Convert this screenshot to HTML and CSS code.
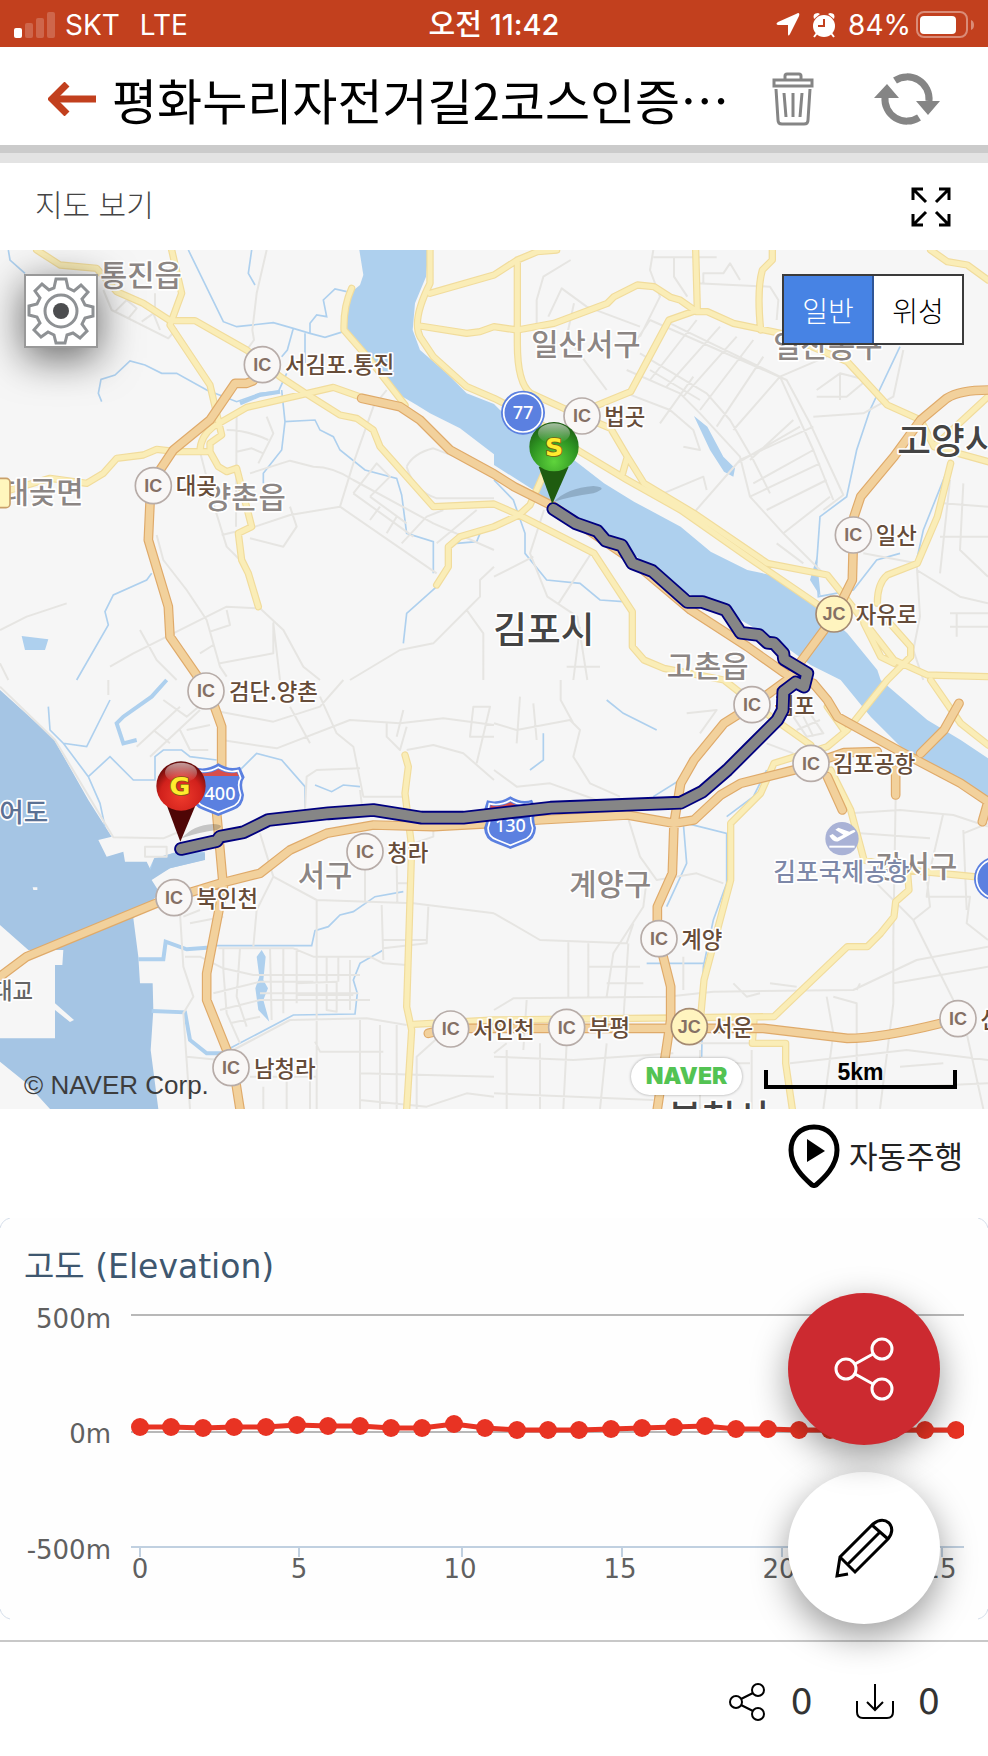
FILE: index.html
```html
<!DOCTYPE html>
<html lang="ko">
<head>
    <meta charset="UTF-8">
    <meta name="viewport" content="width=device-width, initial-scale=1.0">
    <title>평화누리자전거길2코스인증</title>
    <link rel="stylesheet" href="styles.css">
</head>
<body>
    <div class="status-bar">
        <div class="status-left">
            <svg width="42" height="26" viewBox="0 0 42 26" fill="#fff">
                <rect x="0" y="16" width="8" height="10" rx="2"/>
                <g opacity=".2">
                    <rect x="11" y="11" width="8" height="15" rx="2"/>
                    <rect x="22" y="6" width="8" height="20" rx="2"/>
                    <rect x="33" y="0" width="8" height="26" rx="2"/>
                </g>
            </svg>
            <span>SKT</span>
            <span class="network">LTE</span>
        </div>
        <div class="status-time">오전 11:42</div>
        <div class="status-right">
            <svg width="24" height="24" viewBox="0 0 24 24" fill="#fff"><path d="M22 0Q24 0 23 3L14 21Q12 24 12 21V12H2Q-1 11 2 9L20 1Z"/></svg>
            <svg class="alarm" width="24" height="26" viewBox="0 0 24 26">
                <circle cx="12" cy="14" r="11" fill="#fff"/>
                <path d="M2 7Q0 1 6 1L8 2ZM22 7Q24 1 18 1L16 2Z" fill="#fff"/>
                <path d="M5 21L2 25M19 21L22 25" stroke="#fff" stroke-width="2"/>
                <path d="M12 7V14H6" fill="none" stroke="#c2401e" stroke-width="2"/>
            </svg>
            <span>84%</span>
            <svg class="battery" width="58" height="28" viewBox="0 0 58 28">
                <rect x="1" y="1" width="50" height="25" rx="7" fill="none" stroke="#fff" stroke-opacity=".4" stroke-width="2"/>
                <rect x="4" y="5" width="36" height="18" rx="4" fill="#fff"/>
                <path d="M55 9Q58 10 58 14T55 19Z" fill="#fff" fill-opacity=".4"/>
            </svg>
        </div>
    </div>

    <header class="header">
        <button class="icon-btn back" aria-label="뒤로">
            <svg width="49" height="34" viewBox="0 0 49 34" fill="none" stroke="#c2401e"><path d="M48 17H5" stroke-width="7"/><path d="M19 2L4 17L19 32" stroke-width="7"/></svg>
        </button>
        <h1>평화누리자전거길2코스인증⋯</h1>
        <button class="icon-btn trash" aria-label="삭제">
            <svg width="42" height="54" viewBox="0 0 42 54" fill="none" stroke="#858585" stroke-width="3">
                <path d="M13 7V4Q13 2 15 2H27Q29 2 29 4V7"/>
                <rect x="2" y="8" width="38" height="6"/>
                <path d="M4 17L6 48Q6 52 10 52H32Q36 52 36 48L38 17M12 21L14 45M21 21V45M30 21L28 45"/>
            </svg>
        </button>
        <button class="icon-btn" aria-label="새로고침">
            <svg width="66" height="52" viewBox="0 0 66 52">
                <path d="M21 7.500A22 22 0 0 1 55 28M45 44.500A22 22 0 0 1 11 24" fill="none" stroke="#858585" stroke-width="7"/>
                <path d="M42 28H66L54 42ZM0 25H25L13 11Z" fill="#858585"/>
            </svg>
        </button>
    </header>

    <div class="map-title">
        <h2>지도 보기</h2>
        <button class="icon-btn" aria-label="전체 화면">
            <svg width="40" height="40" viewBox="0 0 40 40" fill="none" stroke="#000" stroke-width="3">
                <path d="M2 13V2H12M2 2L15 15M28 2H38V13M38 2L25 15M2 27V38H12M2 38L15 25M28 38H38V27M38 38L25 25"/>
            </svg>
        </button>
    </div>

    <div class="map">
        <svg class="map-canvas" viewBox="0 0 2964 2577">
            <defs>
                <radialGradient id="green" cx=".5" cy=".8" r=".8"><stop offset="0" stop-color="#5fd43c"/><stop offset=".6" stop-color="#2e9422"/><stop offset="1" stop-color="#1c5a12"/></radialGradient>
                <radialGradient id="red" cx=".5" cy=".7" r=".7"><stop offset="0" stop-color="#ef3b2c"/><stop offset=".6" stop-color="#d1211c"/><stop offset="1" stop-color="#5c0808"/></radialGradient>
                <linearGradient id="shine" x2="0" y2="1"><stop offset="0" stop-color="#fff" stop-opacity=".6"/><stop offset="1" stop-color="#fff" stop-opacity="0"/></linearGradient>
                <path id="yellow" d="M110 0L180 45 290 55 350 125 430 160 510 212 585 212 740 300 840 380 920 432 1020 495 1070 505 1120 540 1140 590 1300 770 1482 762 1557 795 1782 910 1897 1085 1897 1190 1932 1230 1992 1255 2172 1290 2312 1400 2432 1485
                    M515 0L545 130 510 225 630 405 665 555 630 580 630 605 655 650 680 665 710 655 755 830 715 850 725 930 745 970 775 1070
                    M30 720L150 685 260 700 310 670 350 625 430 615 470 598 530 605 620 605
                    M600 605Q600 560 640 530L740 472 1000 412 1085 442
                    M1055 115Q1030 170 1032 240L1110 330 1215 465
                    M1290 0V100Q1235 210 1260 260L1300 320 1400 410 1482 445 1590 500 1740 605 1882 690 2042 780 2242 920 2462 1070
                    M1290 130L1482 75 1552 30 1612 5 1670 0M1260 228L1400 250 1440 245 1482 230 1552 240 1662 220 1822 160 1842 140 1912 105 1962 110 2012 142 2040 150 2090 185 2122 185 2200 220 2342 250 2542 335 2662 465 2762 510 2802 590 2964 635
                    M1552 30V280Q1552 400 1592 430L1702 480 1832 535 1882 620 1932 700 2082 790 2302 940 2482 975 2542 1050 2682 1230 2782 1275 2964 1280M1882 620L1865 680
                    M2087 0L2092 180 2007 210 1892 425 1782 470M2317 0V30L2287 60Q2270 120 2282 240M2792 0L2842 35 2902 45 2964 90
                    M1310 1005L1345 950V890L1380 860 1482 830 1557 795 1590 765 1632 670M2802 590L2964 440M2852 640L2812 800 2752 940 2662 975Q2632 1000 2632 1060
                    M2592 1120L2642 1220 2682 1240M2670 1120L2732 1190V1220L2662 1290 2542 1440 2482 1490 2322 1540 2282 1630 2192 1720V1890L2112 2190 2102 2300
                    M1240 2323L1482 2310 2322 2300 2542 2090 2602 2090 2642 2050 2682 2000 2687 1955 2727 1920 2722 1860M2262 2310L2257 2380H2357V2440L2377 2577
                    M2482 1370L2532 1440M2492 1560L2552 1680 2592 1830 2722 1860 2922 1880M2792 1290L2882 1420 2964 1485
                    M1215 1515L1225 1550 1215 1630 1235 1790 1220 2270 1235 2340 1220 2577"/>
                <path id="orange" d="M760 392L740 400H705L630 510 520 600 480 660 450 760 445 870 505 1070 510 1160 600 1290 640 1360 665 1430V1570L650 1690 670 1910 655 1990 620 2170V2250L700 2450 720 2577
                    M1085 445L1200 470 1260 510 1350 600 1482 672 1542 710 1662 770 1882 920 2072 1080 2242 1190 2362 1275 2440 1300 2482 1350 2512 1400 2702 1505 2882 1600 2964 1655 2947 1715
                    M0 2180L80 2120 480 1955 660 1900 780 1870 870 1800 980 1750 1120 1725 1300 1730 1482 1720 1612 1710 1882 1695 2022 1720 2082 1710 2162 1635 2222 1600 2382 1560 2532 1508 2632 1505
                    M2964 420Q2880 420 2840 445L2762 510 2682 620 2582 740 2562 800 2557 990 2502 1100 2362 1290 2252 1370 2172 1420 2082 1530 2042 1600 2022 1720 2017 1870 1972 1970V2050L2012 2210V2310L1972 2577
                    M2877 1360L2832 1440 2762 1510M2687 1560V1635M2482 1580L2527 1680M1285 2350L1350 2335H2290L2542 2365Q2640 2365 2822 2320"/>
                <path id="route" d="M1660 777L1727 820 1792 843 1817 872 1865 886 1897 940 1957 963 2062 1056H2107L2177 1080 2222 1148 2277 1155 2302 1178 2322 1180 2350 1210 2352 1228 2422 1270 2412 1310 2387 1297 2350 1325 2348 1380 2332 1410 2252 1490 2182 1560 2107 1625 2042 1658 1652 1673 1390 1703H1265L1120 1680 985 1690 805 1710 730 1747 660 1760 650 1773 543 1797"/>
            </defs>

            <rect width="2964" height="2577" fill="#f6f6f6"/>
            <path class="river" d="M1078 0L1090 75 1080 105 1050 130 1035 240 1190 430 1250 465 1290 490 1380 535 1482 613V645L1632 740 1882 900 2062 1030 2222 1110 2342 1180 2432 1245 2522 1290 2612 1400 2732 1520 2772 1550 2964 1640V1525L2882 1470 2782 1410 2642 1290 2632 1260 2542 1150 2442 1060 2312 975 2242 960 2132 905 2042 830 1902 755 1812 700 1632 560 1500 480 1482 462 1400 430 1340 370 1260 300 1238 240 1245 160 1278 80 1285 0Z"/>
            <path class="river" d="M65 1158L145 1168 135 1200 75 1200ZM2082 498L2122 530 2170 620 2205 655 2200 680 2172 665 2130 600ZM785 2100L797 2120 790 2190 804 2215 790 2250 808 2315 775 2280 766 2215 778 2180 770 2120ZM2450 920L2462 1040 2430 990ZM430 1895L460 1830 520 1808 615 1805 610 1830 510 1855Z"/>
            <path class="sea" d="M0 1320L160 1465 265 1650 335 1760 295 1770 320 1820 370 1805 375 1835H440L452 1860 462 1825 520 1810H615V1830L510 1855 455 1890 480 1930 400 2005 415 2120 420 2200H458L460 2280 452 2400 475 2577H150L80 2500 0 2435V2365H165V2145H187L190 2100 85 2100 0 2025Z"/>
            <path d="M98 1912H112V1920H100ZM165 2260L222 2310 210 2316 165 2280Z" fill="#f6f6f6"/>
            <path class="stream" d="M565 0L670 215 710 230 820 218 880 235 930 250 975 262 1030 245M930 250V220L950 195 980 200 970 150 1005 117 1040 125M880 235L862 300 845 320M915 250V340M755 0L745 70 765 105M305 455L295 430 303 388 345 375 390 333 435 345 485 370 530 370 620 420 710 455 780 430 835 425 860 370M845 420L855 515 945 510 960 540 1000 560 1020 600 1095 660 1190 685 1205 735 1220 850 1300 875V970M855 515L845 600 790 670V700M455 970L440 990 340 1035 315 1085 325 1125 230 1290M25 0L30 30 75 70M1482 690L1540 750 1575 850 1575 910 1640 990 1740 1000 1800 1050 1870 1055M1310 1010L1220 1090 1210 1180M1440 850L1430 875 1370 880"/>
            <path class="stream" d="M190 1480L265 1580 300 1660 315 1730M145 1370L150 1440 190 1480 260 1490 330 1350M265 1580L330 1520 400 1590H465V1520L490 1500H545L570 1520 650 1530M700 1580L770 1510 845 1530 915 1610V1680M945 1605L995 1625 1030 1605 1080 1610M2050 1720L2060 1840 2000 1970M2060 1720L2180 1750V1900L2140 2010 2110 2150 2105 2420M2300 1560L2260 1640 2180 1700M2450 960L2455 1040 2560 1020 2630 930 2700 910M2850 640L2770 840 2750 930M2700 290L2610 480 2570 600 2540 740 2460 800 2450 940M1820 1350L1870 1390 1970 1440M1630 1450V1530L1590 1560M1960 1640L2040 1590M1940 2140H2110"/>
            <path class="canal" d="M415 2128H490L497 2075 560 2098 640 2092"/>
            <path class="stream" d="M640 2087H935L945 2042 985 2030 1020 1995 1060 1985 1125 1940 1210 1925M690 2395L880 2295 1065 2292 1072 2230 1060 2190 1080 2140 1150 2100"/>
            <path class="canal" d="M455 2283L555 2287 570 2370 620 2410H690M720 460L780 435 840 425M500 1290L455 1340 370 1400 350 1420 370 1480 410 1470"/>

            <path class="minor" d="M800 0L770 130 757 240 762 270 740 300M310 120L335 180 505 265 530 235M345 185L380 150 410 175 385 205M425 215L460 190 480 240M465 130V190M600 605L640 760 680 890 720 930M710 480L708 830M665 855L750 835 870 795 1020 770 1060 640 1120 470 1160 420M870 770L890 830 850 890 750 865M680 540Q740 540 805 570M800 500L820 550 775 640M710 605L755 595 790 610M750 670L870 632 940 650Q1000 650 1060 690L1300 820 1482 900M1060 730L1130 640 1170 680 1110 740M1020 770L1310 970M1060 730L1240 860M1110 740L1220 820M1110 810L1140 770M1160 850L1190 800M1205 880L1280 800 1330 780M1220 650Q1240 610 1300 595L1420 640M1220 650Q1240 720 1310 745H1482M1310 880L1430 780M470 855L490 930 560 1020 620 1110 660 1250 680 1280M330 1250L400 1210 680 1070 780 1075 850 1140 910 1250 960 1290M420 1140L470 1230 530 1290M680 1080L690 1125 630 1145M660 1240L820 1210V1120L840 1290M600 1210L640 1185M1482 950L1440 990V1040L1400 1080 1300 1180 1200 1200 1050 1290M1400 1080L1450 1150V1290M0 1140L80 1100 200 1060M0 1240L25 1290"/>
            <path class="minor" d="M1712 30L1630 80 1610 150V220M1645 200L1685 115 1760 170 1920 230M1722 160L1700 260 1820 420M1960 0L1950 60 1980 140 1920 260M1960 22H2150M2022 20V80L2062 140M2110 100V70H2170L2190 40 2220 90M2090 100L2310 110 2335 150 2330 210M1880 360L2040 430 2100 490 2220 620 2250 740 2350 850 2490 990M1920 310L2120 430 2190 510 2260 630 2310 730M1950 210L2360 390 2430 520 2530 735 2470 780M2010 220L2340 380 2440 600 2500 750M1910 270L1950 210M1950 390L2090 210M2000 410L2160 230M2050 440L2210 260M2100 480L2260 270M2150 530L2290 320M1950 360L2100 450M1880 430L2010 480 2080 540 2100 600 2050 590M1980 520L2080 380M2200 540L2340 380 2480 320M2250 630L2380 510M2210 640L2400 530M2260 700L2440 600M2250 740L2460 640M2300 780L2480 690M2350 850L2490 740M1990 730L2110 680 2120 720M2080 790L2220 630 2440 530M2450 420L2520 370 2600 390 2540 440H2450M2520 370V450M2440 500L2590 490 2680 440 2710 300M1632 780L1590 910 1642 1040 1732 1100 1762 1290M1600 920L1482 980M1676 1060L1780 900M1740 1130L1720 1290M1700 1250H1800M2410 940L2330 880M2590 910L2750 940 2760 1100 2740 1200 2770 1290M2850 690L2820 970M2890 700L2880 900 2964 980M2830 760L2964 770M2820 860H2964M2850 1090H2964M2850 1130H2964M2870 1090V1160M2750 960L2880 1040 2964 1060"/>
            <path class="minor" d="M0 1310L165 1470 340 1762 490 1765 550 1740M435 1790H500V1820H435ZM325 1290V1335M490 1350L560 1400 620 1350M410 1490L540 1370M460 1440L510 1480M450 1520L600 1380M540 1440L570 1500H625M560 1440L630 1425M660 1385L820 1415 960 1370 1030 1290M870 1370L930 1480M665 1470L830 1495 1050 1410 1200 1420 1330 1405 1482 1425M960 1340L1010 1450 1060 1490 1090 1640 1210 1640M1080 1620L1090 1700M1160 1420V1460L1200 1500 1220 1430M1220 1500L1300 1485 1390 1510 1482 1590M1210 1380L1190 1460M1430 1540L1470 1370H1420L1410 1460H1482M915 1680L920 1580 950 1560 1080 1555M780 1750L820 1880 770 1980 760 2090M820 1880L950 1950 1240 1960 1482 1990M950 1950V2577M1095 1860V1960M1190 1840L1192 1960M1190 1900H1240M540 1990L550 2150 580 2240 550 2290 570 2577M550 2000L600 1980M670 2000L570 2020M555 2120H600L670 2155 760 2175H1080M655 2095H880L940 2120H1110L1150 2140 1220 2145M670 2095V2160L680 2290 720 2380M720 2095L710 2240 740 2330M850 2095V2290M810 2095L815 2310M890 2095V2260M640 2230L780 2195H940M780 2230H1075M660 2280L780 2250H1110M690 2320L780 2300M890 2200L1010 2195V2285L980 2280V2120M890 2235H1060M1015 2120V2195M1050 2130V2280M1145 1965L1150 2130M1285 1970L1280 2080 1150 2095M1150 2070H1280M700 2400L870 2310 1100 2305 1220 2325M1080 2310V2577M1140 2325V2577M1190 2325V2577M945 2375L960 2405H1150M560 2420L660 2430M750 2480H950M790 2510V2577M860 2480V2577M930 2480V2577M1250 2577V2420L1350 2330M1080 2470L1482 2480M1080 2550L1280 2570 1400 2530 1482 2540M1300 1725V1760L1240 1780"/>
            <path class="minor" d="M1482 1420L1550 1440 1710 1410 1740 1440 1720 1520 1770 1600 1860 1640M1682 1290V1350L1720 1420M1550 1480L1560 1340M1610 1470L1600 1360M1482 1560L1550 1610 1650 1600 1790 1650M1880 1690L1920 1820 1970 1890 2090 1870 2170 1900M1940 1890L1930 1970 1840 2110 1820 2240M1482 1990L1620 2070 1880 2080 1900 2020M1705 2075V2240M1765 2080V2240M1765 2150H1920M1885 2080L1870 2310M1820 2200H1930M1482 2280L1540 2245 2000 2240 2140 2225 2560 2220 2750 2130 2964 2090M2050 2220V2120M2200 2200L2240 2240 2280 2230M2310 2200L2390 2210M2550 1690L2700 1680 2860 1695 2964 1730M2580 1750L2790 1765M2830 1690L2790 1860 2780 1940H2910L2900 2020 2964 2070M2687 1640L2680 2060V2260L2640 2577M2600 1870L2740 2010 2800 2130 2880 2290M2740 2010L2790 1970 2780 1880M2890 1740L2900 1980M2964 1720L2890 1750M2680 2200L2964 2150M2480 2240L2500 2350 2470 2577M2500 2240L2570 2260V2577M2570 2220L2580 2200M1482 2410L1520 2380M1520 2400V2577M1580 2250L1570 2400M1620 2380V2577M1700 2380L1690 2577M1820 2380L1800 2577M1482 2420L1720 2430 2020 2410M1482 2530L1960 2550M2080 2440H2250M2100 2400V2577M2255 2400V2577M2090 2380H2260M2370 2440L2720 2400 2964 2430M2380 2510H2730L2964 2500M2700 2450L2830 2440M2900 2350L2950 2577M2380 1400L2430 1390 2470 1450 2420 1460ZM2410 1400L2440 1460M2390 1440L2460 1410M2300 1480L2380 1510M2100 1450L2150 1380 2060 1390"/>

            <use href="#yellow" class="yellow-edge"/>
            <use href="#yellow" class="yellow-road"/>
            <use href="#orange" class="orange-edge"/>
            <use href="#orange" class="orange-road"/>

            <g class="area">
                <text x="300" y="108">통진읍</text>
                <text x="5" y="758">대곶면</text>
                <text x="612" y="775">양촌읍</text>
                <text x="1594" y="315">일산서구</text>
                <text x="2320" y="320">일산동구</text>
                <text x="2000" y="1282">고촌읍</text>
                <text x="893" y="1907">서구</text>
                <text x="1708" y="1935">계양구</text>
                <text x="2626" y="1880">강서구</text>
            </g>
            <rect x="-30" y="685" width="60" height="88" rx="12" fill="#fff6bd" stroke="#c9a06a" stroke-width="5"/>
            <g class="city">
                <text x="2692" y="612">고양시</text>
                <text x="1480" y="1178">김포시</text>
                <text x="2004" y="2642">부천시</text>
            </g>
            <text class="island" x="-2" y="1715">어도</text>
            <text class="bridge" x="-24" y="2248">대교</text>
            <circle cx="2526" cy="1766" r="50" fill="#a9b2d6"/>
            <path d="M2488 1790H2564" stroke="#fff" stroke-width="6"/>
            <path d="M2488 1757L2498 1752 2512 1763 2530 1754 2506 1739 2515 1733 2548 1745Q2566 1735 2566 1745L2515 1774Q2500 1778 2488 1757Z" fill="#fff"/>
            <text class="airport" x="2320" y="1893">김포국제공항</text>

            <g class="badge">
                <circle cx="787" cy="344" r="54"/><text x="787" y="363">IC</text>
                <circle cx="460" cy="707" r="54"/><text x="460" y="726">IC</text>
                <circle cx="618" cy="1323" r="54"/><text x="618" y="1342">IC</text>
                <circle cx="1746" cy="498" r="54"/><text x="1746" y="517">IC</text>
                <circle cx="2560" cy="855" r="54"/><text x="2560" y="874">IC</text>
                <circle cx="1095" cy="1805" r="54"/><text x="1095" y="1824">IC</text>
                <circle cx="522" cy="1943" r="54"/><text x="522" y="1962">IC</text>
                <circle cx="693" cy="2453" r="54"/><text x="693" y="2472">IC</text>
                <circle cx="1352" cy="2337" r="54"/><text x="1352" y="2356">IC</text>
                <circle cx="2256" cy="1364" r="54"/><text x="2256" y="1383">IC</text>
                <circle cx="2433" cy="1540" r="54"/><text x="2433" y="1559">IC</text>
                <circle cx="1977" cy="2066" r="54"/><text x="1977" y="2085">IC</text>
                <circle cx="1700" cy="2332" r="54"/><text x="1700" y="2351">IC</text>
                <circle cx="2874" cy="2306" r="54"/><text x="2874" y="2325">IC</text>
                <circle class="jc" cx="2502" cy="1092" r="54"/><text x="2502" y="1111">JC</text>
                <circle class="jc" cx="2068" cy="2330" r="54"/><text x="2068" y="2349">JC</text>
            </g>
            <g class="junction">
                <text x="855" y="369">서김포.통진</text>
                <text x="527" y="732">대곶</text>
                <text x="687" y="1350">검단.양촌</text>
                <text x="1813" y="524">법곳</text>
                <text x="2627" y="881">일산</text>
                <text x="2567" y="1119">자유로</text>
                <text x="1162" y="1833">청라</text>
                <text x="589" y="1970">북인천</text>
                <text x="762" y="2480">남청라</text>
                <text x="1419" y="2364">서인천</text>
                <text x="2322" y="1391">김포</text>
                <text x="2499" y="1567">김포공항</text>
                <text x="2044" y="2093">계양</text>
                <text x="1767" y="2359">부평</text>
                <text x="2136" y="2357">서운</text>
                <text x="2941" y="2333">신월</text>
            </g>

            <g class="shield">
                <circle cx="1569" cy="488" r="66"/><circle class="ring" cx="1569" cy="488" r="58"/>
                <text x="1569" y="507">77</text>
                <circle cx="2988" cy="1886" r="66"/><circle class="ring" cx="2988" cy="1886" r="58"/>
                <path id="plate" d="M585 1552Q620 1562 655 1540Q690 1562 720 1550L734 1582Q720 1600 732 1635Q730 1670 700 1680L655 1698 610 1680Q578 1670 576 1635Q590 1600 576 1582Z"/>
                <path class="ring" d="M592 1562Q625 1570 655 1552Q685 1570 714 1562L722 1584Q710 1600 722 1635Q720 1662 694 1671L655 1687 616 1671Q588 1662 588 1635Q600 1600 588 1584Z"/>
                <path class="plate-top" d="M596 1567Q625 1575 655 1558Q685 1575 710 1567L716 1578H594Z"/>
                <text x="660" y="1650">400</text>
                <g transform="translate(876 99)">
                    <use href="#plate"/>
                    <path class="ring" d="M592 1562Q625 1570 655 1552Q685 1570 714 1562L722 1584Q710 1600 722 1635Q720 1662 694 1671L655 1687 616 1671Q588 1662 588 1635Q600 1600 588 1584Z"/>
                    <path class="plate-top" d="M596 1567Q625 1575 655 1558Q685 1575 710 1567L716 1578H594Z"/>
                    <text x="655" y="1648">130</text>
                </g>
            </g>

            <path d="M1662 755Q1700 715 1780 708Q1830 712 1780 730Q1710 740 1662 755Z" fill="#345" opacity=".25"/>
            <path d="M545 1765Q580 1725 640 1722Q680 1725 650 1740Q600 1745 545 1765Z" fill="#333" opacity=".25"/>
            <use href="#route" class="route-edge"/>
            <use href="#route" class="route-line"/>

            <path d="M1616 650L1657 762 1706 650Z" fill="#1f5c10"/>
            <circle cx="1662" cy="590" r="74" fill="url(#green)"/>
            <ellipse cx="1662" cy="550" rx="48" ry="30" fill="url(#shine)"/>
            <text class="pin-text" x="1662" y="618">S</text>
            <path d="M500 1665L541 1775 587 1665Z" fill="#4f0606"/>
            <circle cx="543" cy="1608" r="74" fill="url(#red)"/>
            <ellipse cx="543" cy="1568" rx="48" ry="30" fill="url(#shine)"/>
            <text class="pin-text" x="540" y="1636">G</text>
        </svg>

        <button class="map-settings" aria-label="설정">
            <svg width="68" height="68" viewBox="-34 -34 68 68">
                <path d="M-5 -32H5L7 -23L13 -20L20 -26L27 -19L21 -12L24 -6L32 -4V5L24 7L21 13L26 20L19 27L12 22L6 24L4 32H-5L-7 24L-13 21L-20 26L-27 19L-21 12L-24 6L-32 4V-5L-24 -7L-21 -13L-26 -20L-19 -27L-12 -21L-7 -23Z" fill="none" stroke="#8e9194" stroke-width="3"/>
                <circle r="16" fill="none" stroke="#8e9194" stroke-width="3"/>
                <circle r="8" fill="#4c4d4f"/>
            </svg>
        </button>
        <div class="map-type">
            <button class="active">일반</button>
            <button>위성</button>
        </div>
        <div class="copyright">© NAVER Corp.</div>
        <div class="naver">NAVER</div>
        <div class="scale">5km</div>
    </div>

    <div class="play-row">
        <button class="play-btn">
            <svg width="52" height="64" viewBox="0 0 52 64">
                <path d="M26 3C12 3 3 13 3 26C3 42 16 54 24 61Q26 62 28 61C36 54 49 42 49 26C49 13 40 3 26 3Z" fill="none" stroke="#000" stroke-width="5"/>
                <path d="M19 15L37 27L19 38Z"/>
            </svg>
            <span>자동주행</span>
        </button>
    </div>

    <div class="chart-wrap">
        <svg class="chart" viewBox="0 1218 988 402">
            <path class="corner" d="M0 1228Q2 1220 10 1218M978 1218Q986 1220 988 1228M0 1609Q2 1617 10 1619M978 1619Q986 1617 988 1609"/>
            <text class="chart-title" x="24" y="1278">고도 (Elevation)</text>
            <g class="chart-y">
                <text x="111" y="1328">500m</text>
                <text x="111" y="1443">0m</text>
                <text x="111" y="1559">-500m</text>
            </g>
            <path class="grid" d="M131 1315H964M131 1432H964"/>
            <path class="axis" d="M131 1547H964M140 1546V1557M299 1546V1557M462 1546V1557M622 1546V1557M782 1546V1557M942 1546V1557"/>
            <g class="chart-x">
                <text x="140" y="1578">0</text>
                <text x="299" y="1578">5</text>
                <text x="460" y="1578">10</text>
                <text x="620" y="1578">15</text>
                <text x="779" y="1578">20</text>
                <text x="940" y="1578">25</text>
            </g>
            <svg x="131" y="1218" width="833" height="402" viewBox="131 1218 833 402">
                <g id="series"></g>
            </svg>
        </svg>
        <div class="fabs">
            <button class="fab fab-share" aria-label="공유">
                <svg width="60" height="64" viewBox="0 0 60 64" fill="none" stroke="#fff" stroke-width="3">
                    <circle cx="12" cy="32" r="10"/><circle cx="48" cy="12" r="10"/><circle cx="48" cy="52" r="10"/>
                    <path d="M21 27L39 17M21 37L39 47"/>
                </svg>
            </button>
            <button class="fab fab-edit" aria-label="편집">
                <svg width="60" height="60" viewBox="0 0 60 60" fill="none" stroke="#000" stroke-width="3">
                    <path d="M14 56L3 58L6 39L39 6Q48 -1 55 5Q61 12 54 21L21 54L6 39M38 7L54 21M46 14L14 46"/>
                </svg>
            </button>
        </div>
    </div>

    <footer class="footer">
        <button class="count-btn">
            <svg width="40" height="40" viewBox="0 0 40 40" fill="none" stroke="#000" stroke-width="2">
                <circle cx="9" cy="20" r="6"/><circle cx="31" cy="8" r="6"/><circle cx="31" cy="32" r="6"/>
                <path d="M14 17L26 11M14 23L26 29"/>
            </svg>
            <span>0</span>
        </button>
        <button class="count-btn">
            <svg width="40" height="40" viewBox="0 0 40 40" fill="none" stroke="#000" stroke-width="2">
                <path d="M20 2V28M12 20L20 28L28 20M2 19V30Q2 36 8 36H32Q38 36 38 30V19"/>
            </svg>
            <span>0</span>
        </button>
    </footer>

    <script>
        // altitude in metres, one point per km or so
        const elevations = [21, 23, 18, 20, 23, 29, 24, 25, 19, 19, 36, 16, 10, 8, 9, 15, 17, 20, 28, 11, 12, 8, 10, 11, 9, 10, 8];
        const step = 816 / (elevations.length - 1);
        const points = elevations.map((m, i) => [Math.round(140 + i * step), Math.round(1432 - m * 0.23)]);
        let out = '<polyline points="' + points.join(' ') + '"/>';
        points.forEach(p => {
            out += `<circle cx="${p[0]}" cy="${p[1]}" r="9"/>`;
        });
        document.getElementById('series').innerHTML = out;
    </script>
</body>
</html>
```
FILE: styles.css
```css
* {
    box-sizing: border-box;
}
body {
    margin: 0;
    background: #fff;
    font-family: "Noto Sans CJK KR", sans-serif;
}
button {
    font-family: inherit;
    color: inherit;
    background: none;
    border: none;
    padding: 0;
    cursor: pointer;
}
svg {
    display: block;
}
h1, h2 {
    margin: 0;
    font-weight: 400;
}
.status-bar {
    display: grid;
    grid-template-columns: 1fr auto 1fr;
    align-items: center;
    height: 47px;
    padding: 2px 14px 0;
    background: #c2401e;
    color: #fff;
    font-family: Inter, "Noto Sans CJK KR", sans-serif;
    font-size: 28px;
    line-height: 40px;
}
.status-left, .status-right {
    display: flex;
    align-items: center;
}
.status-left span {
    margin-left: 9px;
}
.status-left .network {
    margin-left: 20px;
}
.status-right {
    justify-content: flex-end;
}
.status-time {
    font-size: 29px;
    font-weight: 500;
}
.alarm {
    margin: 0 12px;
}
.battery {
    margin-left: 5px;
}
.header {
    display: flex;
    align-items: center;
    height: 106px;
    padding: 6px 48px 0;
    border-bottom: 8px solid #cbcbcb;
}
.header h1 {
    flex: 1;
    margin-left: 15px;
    font-size: 49px;
    line-height: 72px;
    white-space: nowrap;
    overflow: hidden;
}
.trash {
    margin-right: 60px;
}
.map-title {
    display: flex;
    align-items: center;
    justify-content: space-between;
    height: 97px;
    padding: 0 37px 0 35px;
    border-top: 10px solid #e3e3e3;
}
.map-title h2 {
    padding-bottom: 8px;
    font-size: 30px;
    line-height: 44px;
    font-weight: 300;
    color: #444;
}
.map {
    position: relative;
    overflow: hidden;
}
.map-canvas {
    width: 100%;
    height: auto;
}

/* map layers */
.river {
    fill: #aed0ee;
}
.sea {
    fill: #a5c5e4;
}
.stream {
    fill: none;
    stroke: #aed0ee;
    stroke-width: 5;
}
.canal {
    fill: none;
    stroke: #aed0ee;
    stroke-width: 12;
}
.minor {
    fill: none;
    stroke: #e6e5e2;
    stroke-width: 6;
    stroke-linejoin: round;
}
.yellow-edge, .yellow-road, .orange-edge, .orange-road {
    fill: none;
    stroke-linecap: round;
    stroke-linejoin: round;
}
.yellow-edge {
    stroke: #f1dc9c;
    stroke-width: 22;
}
.yellow-road {
    stroke: #faedb7;
    stroke-width: 15;
}
.orange-edge {
    stroke: #dfaa6a;
    stroke-width: 29;
}
.orange-road {
    stroke: #f2d19c;
    stroke-width: 22;
}
.map-canvas text {
    paint-order: stroke;
    stroke: #fff;
    stroke-width: 10;
    stroke-linejoin: round;
}
.area {
    font-size: 89px;
    font-weight: 500;
    fill: #8c8684;
}
.city {
    font-size: 110px;
    font-weight: 500;
    fill: #444;
}
.island {
    font-size: 80px;
    font-weight: 500;
    fill: #5b7194;
}
.bridge {
    font-size: 67px;
    font-weight: 500;
    fill: #666;
}
.airport {
    font-size: 74px;
    font-weight: 500;
    fill: #7d88a8;
}
.junction {
    font-size: 67px;
    font-weight: 500;
    fill: #664c39;
}
.badge {
    font-family: "Liberation Sans", sans-serif;
    font-size: 54px;
    font-weight: bold;
    fill: #857065;
    text-anchor: middle;
}
.badge circle {
    fill: #f9f7f6;
    stroke: #b7aca8;
    stroke-width: 5;
}
.badge .jc {
    fill: #fff4bf;
    stroke: #a58a72;
}
.map-canvas .badge text,
.map-canvas .shield text {
    stroke: none;
}
.shield {
    fill: #5b80e0;
    font-family: "Noto Sans", sans-serif;
    font-size: 54px;
    font-weight: 500;
    text-anchor: middle;
}
.shield .ring {
    fill: none;
    stroke: #fff;
    stroke-width: 5;
}
.shield .plate-top {
    fill: #d84e4b;
}
.shield text {
    fill: #fff;
}
.route-edge, .route-line {
    fill: none;
    stroke: #00007f;
    stroke-width: 41;
    stroke-linecap: round;
    stroke-linejoin: round;
}
.route-line {
    stroke: #868686;
    stroke-width: 30;
}
.map-canvas .pin-text {
    font-family: "DejaVu Sans", sans-serif;
    font-size: 76px;
    font-weight: bold;
    text-anchor: middle;
    fill: #ffec2e;
    stroke: #7d5a10;
    stroke-width: 5;
}

/* map controls */
.map-settings {
    position: absolute;
    top: 24px;
    left: 24px;
    width: 74px;
    height: 74px;
    background: #fff;
    border: 2px solid #999;
    padding: 1px;
    box-shadow: 0 10px 40px rgba(0, 0, 0, .6);
}
.map-type {
    position: absolute;
    top: 24px;
    right: 24px;
    display: flex;
    height: 71px;
    border: 2px solid #3b3b3b;
    background: #fff;
}
.map-type button {
    width: 88px;
    font-size: 28px;
    font-weight: 300;
}
.map-type .active {
    width: 90px;
    background: #4783e4;
    color: #fff;
    border-right: 2px solid #2f5596;
}
.copyright {
    position: absolute;
    left: 24px;
    bottom: 8px;
    font-family: "Liberation Sans", sans-serif;
    font-size: 26px;
    line-height: 32px;
    color: #3d3d3d;
}
.naver {
    position: absolute;
    right: 246px;
    bottom: 14px;
    width: 111px;
    height: 37px;
    border-radius: 20px;
    background: #fff;
    box-shadow: 0 0 3px rgba(0, 0, 0, .35);
    color: #53c353;
    font-family: Inter, sans-serif;
    font-size: 23px;
    font-weight: 900;
    line-height: 37px;
    text-align: center;
}
.scale {
    position: absolute;
    right: 31px;
    bottom: 20px;
    width: 193px;
    height: 19px;
    border: 4px solid #000;
    border-top: none;
    font-family: "Liberation Sans", sans-serif;
    font-size: 23px;
    font-weight: bold;
    line-height: 4px;
    text-align: center;
}

.play-row {
    display: flex;
    justify-content: flex-end;
    height: 109px;
    padding: 15px 25px 0;
}
.play-btn {
    display: flex;
    align-items: center;
    gap: 9px;
    height: 64px;
    font-size: 31px;
    color: #222;
}
.play-btn span {
    padding-bottom: 4px;
}

.chart-wrap {
    position: relative;
    background: #fefefe;
}
.chart {
    width: 100%;
    height: auto;
    font-family: "DejaVu Sans", "Noto Sans CJK KR", sans-serif;
}
.chart .corner {
    fill: none;
    stroke: #d5deea;
    stroke-width: 1;
}
.chart-title {
    font-size: 33px;
    fill: #3e576f;
}
.chart-y, .chart-x {
    font-size: 26px;
    fill: #606060;
    text-anchor: end;
}
.chart-x {
    text-anchor: middle;
}
.grid, .axis {
    stroke: #b8b8b8;
    stroke-width: 2;
}
.axis {
    stroke: #c0d0e0;
}
#series polyline {
    fill: none;
    stroke: #e83323;
    stroke-width: 5;
}
#series circle {
    fill: #e83323;
}
.fabs {
    position: absolute;
    top: 75px;
    right: 48px;
    display: flex;
    flex-direction: column;
    gap: 27px;
}
.fab {
    display: flex;
    align-items: center;
    justify-content: center;
    width: 152px;
    height: 152px;
    border-radius: 50%;
    background: #fff;
    box-shadow: 0 12px 36px rgba(0, 0, 0, .4);
}
.fab-share {
    position: relative;
    z-index: 1;
    background: #cc2a30;
}

.footer {
    display: flex;
    justify-content: flex-end;
    gap: 42px;
    height: 116px;
    margin-top: 20px;
    padding: 6px 48px 0;
    border-top: 2px solid #c8c8c8;
}
.count-btn {
    display: flex;
    align-items: center;
    gap: 23px;
    font-family: "DejaVu Sans", sans-serif;
    font-size: 35px;
    color: #333;
}
```
